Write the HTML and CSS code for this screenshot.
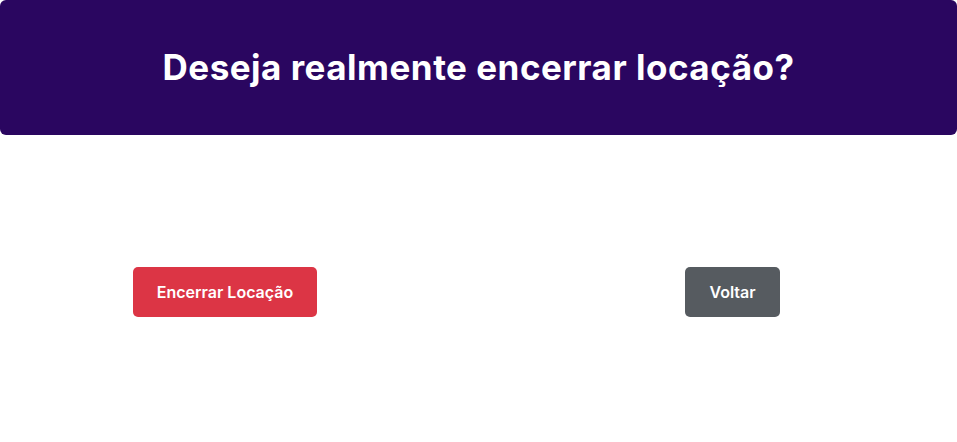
FILE: index.html
```html
<!DOCTYPE html>
<html lang="pt-BR">
<head>
<meta charset="utf-8">
<link rel="stylesheet" href="styles.css">
</head>
<body>
<div class="modal">
  <header class="modal-header">
    <h1 class="modal-title">Deseja realmente encerrar locação?</h1>
  </header>
  <div class="modal-actions">
    <button class="btn btn-danger">Encerrar Locação</button>
    <button class="btn btn-secondary">Voltar</button>
  </div>
</div>
</body>
</html>
```
FILE: styles.css
```css
html, body {
  margin: 0;
  padding: 0;
  background: #ffffff;
  font-family: Inter, "Noto Sans", sans-serif;
}
.modal {
  width: 957px;
  height: 442px;
  display: flex;
  flex-direction: column;
}
.modal-header {
  height: 135px;
  background: #2a0660;
  border-radius: 6px;
  display: flex;
  align-items: center;
  justify-content: center;
}
.modal-title {
  margin: 0;
  color: #ffffff;
  font-size: 35px;
  font-weight: 700;
  letter-spacing: 0.5px;
  line-height: 1;
  padding-bottom: 1px;
}
.modal-actions {
  display: flex;
  align-items: center;
  padding: 132px 0 0 133px;
  gap: 368px;
}
.btn {
  height: 50px;
  border: none;
  border-radius: 5px;
  color: #ffffff;
  font-family: Inter, "Noto Sans", sans-serif;
  font-size: 16px;
  font-weight: 600;
  padding: 0;
  cursor: pointer;
}
.btn-danger {
  width: 184px;
  background: #dc3545;
}
.btn-secondary {
  width: 95px;
  background: #565b60;
}
```
